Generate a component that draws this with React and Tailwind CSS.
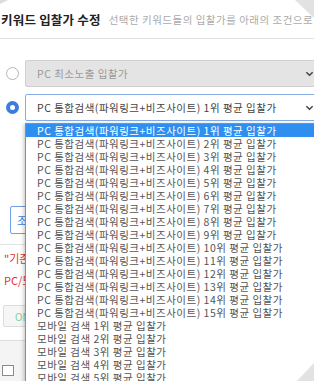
import React from 'react';

const pcItems = Array.from({ length: 15 }, (_, i) => `PC 통합검색(파워링크+비즈사이트) ${i + 1}위 평균 입찰가`);
const mobileItems = Array.from({ length: 5 }, (_, i) => `모바일 검색 ${i + 1}위 평균 입찰가`);

const Chevron = () => (
  <svg width="9" height="9" viewBox="0 0 10 10" className="shrink-0">
    <path d="M1.5 3.5 L5 7 L8.5 3.5" fill="none" stroke="#444" strokeWidth="1.6" />
  </svg>
);

const Radio = ({ checked }) =>
  checked ? (
    <span className="w-[13px] h-[13px] rounded-full bg-[#3b7ddd] flex items-center justify-center shrink-0">
      <span className="w-[5px] h-[5px] rounded-full bg-white" />
    </span>
  ) : (
    <span className="w-[13px] h-[13px] rounded-full border border-[#b5b5b5] bg-white shrink-0" />
  );

export default function App() {
  const items = [...pcItems, ...mobileItems];
  return (
    <div className="relative w-[314px] h-[381px] overflow-hidden bg-white font-['Noto_Sans_CJK_KR',sans-serif] whitespace-nowrap">
      {/* 헤더 */}
      <div className="flex items-center h-[39px] border-b border-[#e3e3e3] pl-[1px] pt-[2px]">
        <h2 className="text-[12.5px] font-bold text-[#222] tracking-[0.2px]">키워드 입찰가 수정</h2>
        <span className="ml-[8px] text-[10.5px] text-[#aaa] tracking-[0.5px]">선택한 키워드들의 입찰가를 아래의 조건으로</span>
      </div>

      {/* 조건 선택 */}
      <div className="flex flex-col gap-[7px] pt-[21px] pl-[6px]">
        <div className="flex items-center gap-[6px]">
          <Radio checked={false} />
          <div className="flex items-center justify-between w-[296px] h-[27px] shrink-0 bg-[#e4e4e4] border border-[#cfcfcf] rounded-[2px] pl-[11px] pr-[6px]">
            <span className="text-[10.5px] text-[#9a9a9a] tracking-[0.5px]">PC 최소노출 입찰가</span>
            <Chevron />
          </div>
        </div>
        <div className="flex items-center gap-[6px]">
          <Radio checked />
          <div className="flex items-center justify-between w-[296px] h-[27px] shrink-0 bg-white border border-[#86aee3] rounded-[2px] pl-[11px] pr-[6px]">
            <span className="text-[10.5px] text-[#444] tracking-[0.5px]">PC 통합검색(파워링크+비즈사이트) 1위 평균 입찰가</span>
            <Chevron />
          </div>
        </div>
      </div>

      {/* 가려진 아래 내용 */}
      <div className="mt-[85px] pl-[10px]">
        <div className="w-[60px] h-[28px] border border-[#6f9fe0] rounded-[2px] flex items-center pl-[6px] text-[11px] text-[#3b7ddd]">조회</div>
      </div>
      <div className="mt-[10px] border-t border-[#e3e3e3] pl-[4px] pt-[2px] text-[11px] text-[#e53030] leading-[22px]">
        <p>"기존 입찰가</p>
        <p>PC/모바일</p>
      </div>
      <div className="mt-[14px] pl-[3px]">
        <div className="w-[60px] h-[22px] bg-[#f6f6f6] border border-[#dcdcdc] rounded-[2px] flex items-center pl-[11px] text-[10px] text-[#7fd0a0]">ON</div>
      </div>
      <div className="mt-[13px] border-t border-[#dcdcdc] bg-[#f4f4f4] h-[60px] pl-[2px] pt-[24px]">
        <div className="w-[12px] h-[11px] border border-[#8a8a8a] bg-white" />
      </div>

      {/* 펼쳐진 드롭다운 목록 */}
      <ul className="absolute left-[25px] top-[123px] w-[300px] bg-white border border-[#8f8f8f] shadow-[-1px_1px_4px_rgba(0,0,0,0.25)]">
        {items.map((label, i) => (
          <li
            key={label}
            className={`h-[13px] leading-[13px] pl-[11px] text-[10.5px] tracking-[0.5px] ${i === 0 ? 'bg-[#2f8ff0] text-white' : 'text-[#555]'}`}
          >
            {label}
          </li>
        ))}
      </ul>

      {/* 모서리 */}
      <svg className="absolute inset-0 pointer-events-none" width="314" height="381">
        <polygon points="0,0 8,0 0,4" fill="#dcdcdc" />
        <polygon points="295,0 314,0 314,18" fill="#e2e2e2" />
        <polygon points="297,381 314,381 314,363" fill="#e2e2e2" />
      </svg>
    </div>
  );
}
